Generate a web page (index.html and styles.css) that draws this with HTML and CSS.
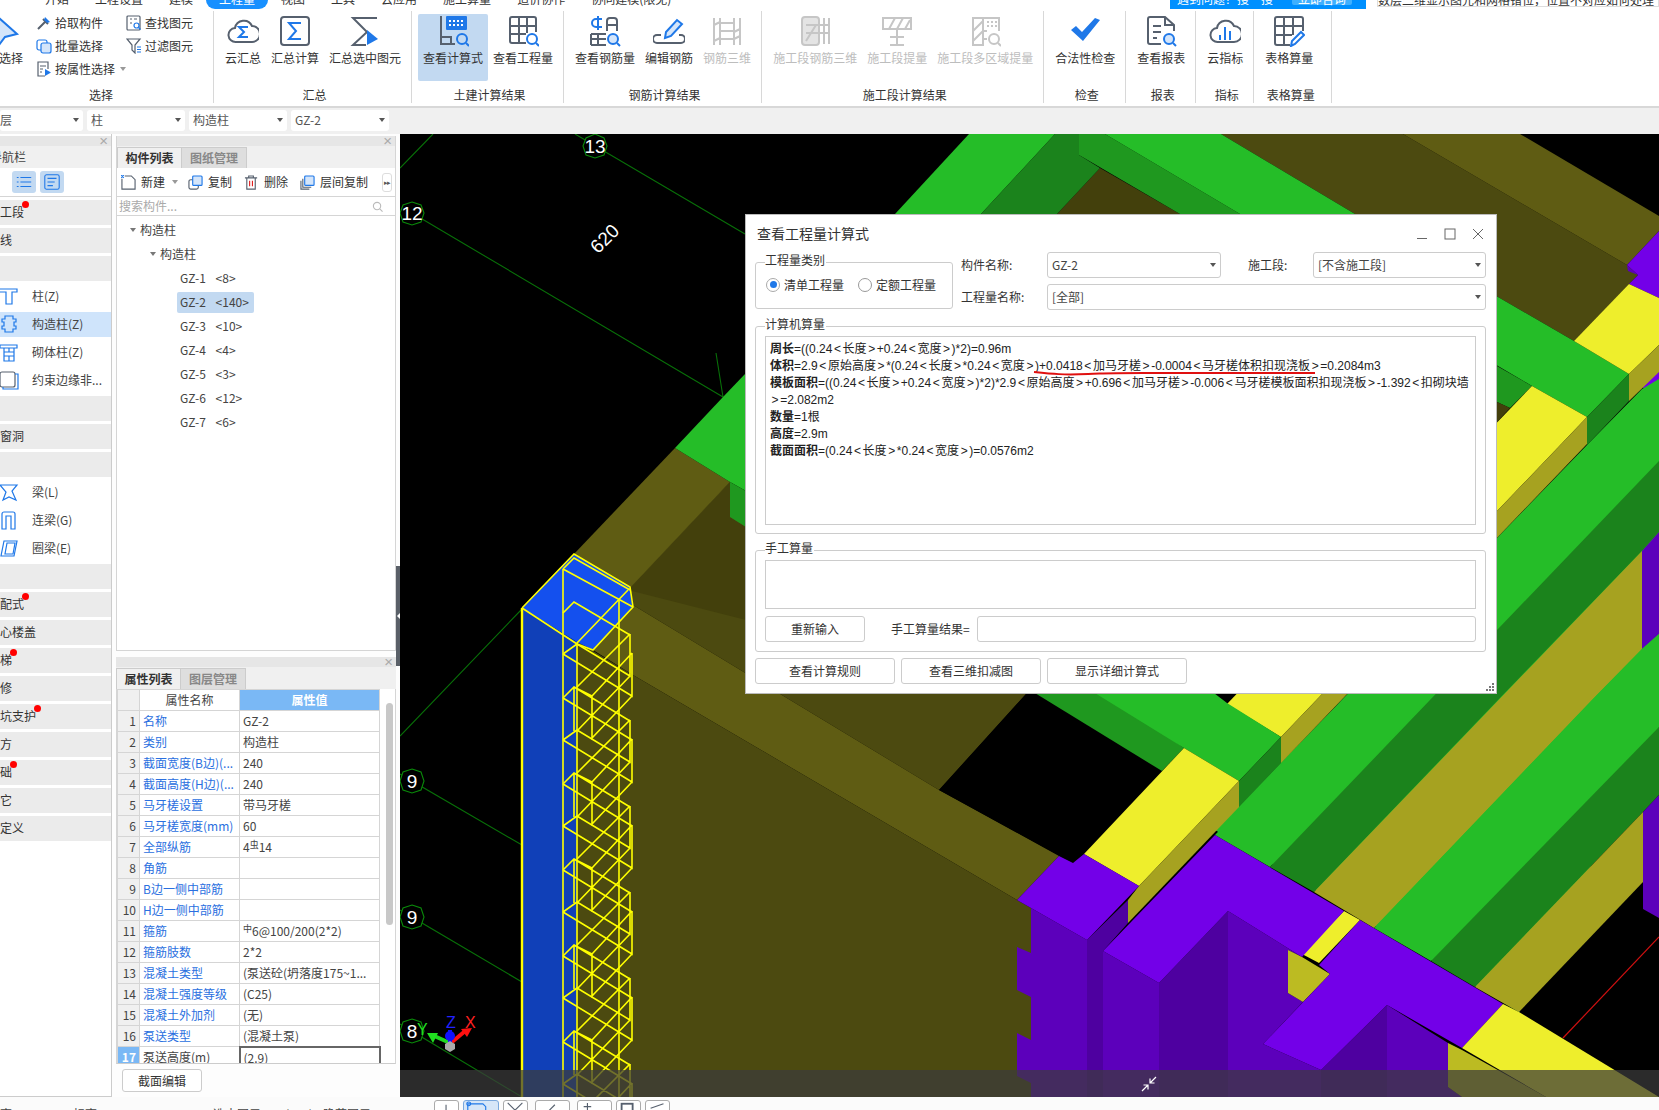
FILE: index.html
```html
<!DOCTYPE html>
<html lang="zh">
<head>
<meta charset="utf-8">
<title>查看工程量计算式</title>
<link rel="stylesheet" href="styles.css">
</head>
<body>
<div class="app">
  <div class="tabs">
    <span>开始</span><span>工程设置</span><span>建模</span><span class="tab-on">工程量</span><span>视图</span><span>工具</span><span>云应用</span><span>施工算量</span><span>造价协作</span><span>协同建模(限免)</span>
    <div class="banner"><span>遇到问题？搜一搜</span><b>立即咨询</b></div>
    <div class="topsearch">数层二维显示图元和网格错位，位置不对应如何处理</div>
  </div>

  <div class="ribbon">
    <div class="group g-first">
      <div class="btns">
        <div class="btn btn-sel">
          <svg class="ic" viewBox="0 0 32 32"><path class="b lf" d="M4 3 L22 19 L10 22 L4 30 Z"/></svg><span>选择</span>
        </div>
        <div class="col c1">
          <div class="mini"><svg viewBox="0 0 16 16"><path class="g" d="M2 14l7-7M7 4l5 5"/><path class="bf" d="M9 2l5 5-3 1-3-3z"/></svg><span>拾取构件</span></div>
          <div class="mini"><svg viewBox="0 0 16 16"><rect class="b1" x="1" y="2" width="10" height="10" rx="2"/><rect class="b1 lf" x="5" y="5" width="10" height="10" rx="2"/></svg><span>批量选择</span></div>
          <div class="mini"><svg viewBox="0 0 16 16"><path class="g1" d="M9 15H2V1h10v7M4 5h6M4 8h3M4 11h2"/><path class="bf" d="M9 8l6 3.500L9 15z"/></svg><span>按属性选择</span><i class="caret c-l"></i></div>
        </div>
        <div class="col">
          <div class="mini"><svg viewBox="0 0 16 16"><rect class="g1" x="1" y="1" width="13" height="14" rx="1"/><path class="g1" d="M4 4h2M8 4h3M4 8h2"/><circle class="b1" cx="10.500" cy="10.500" r="2.500"/><path class="b1" d="M12.500 12.500l2 2"/></svg><span>查找图元</span></div>
          <div class="mini"><svg viewBox="0 0 16 16"><path class="g1" d="M1 1h13L9 7v8l-3-3V7z"/><path class="b1" d="M11 9h4M11 11.500h4M11 14h4"/></svg><span>过滤图元</span></div>
        </div>
      </div>
      <div class="glabel gl-first">选择</div>
    </div>

    <div class="group">
      <div class="btns">
        <div class="btn"><svg class="ic" viewBox="0 0 32 32"><path class="g" d="M9 27a7 7 0 0 1-1-14 9 9 0 0 1 17-2 8 8 0 0 1 0 16z"/><path class="b" d="M21 12h-9l5 5-5 5h9"/></svg><span>云汇总</span></div>
        <div class="btn"><svg class="ic" viewBox="0 0 32 32"><rect class="g" x="2" y="2" width="28" height="28" rx="3"/><path class="b" d="M22 8H10l7 8-7 8h12"/></svg><span>汇总计算</span></div>
        <div class="btn"><svg class="ic" viewBox="0 0 32 32"><path class="g" d="M28 3H4l14 14L4 30h13"/><path class="bf" d="M18 15l11 9-11 6z"/></svg><span>汇总选中图元</span></div>
      </div>
      <div class="glabel">汇总</div>
    </div>

    <div class="group">
      <div class="btns">
        <div class="btn btn-on"><svg class="ic" viewBox="0 0 32 32"><path class="g" d="M4 1v28h14M4 22h10v7"/><rect class="bf" x="9" y="1" width="21" height="14" rx="1"/><path class="w" stroke-dasharray="2 2" d="M12 6h16M12 10h16"/><circle class="b" cx="25" cy="24" r="5"/><path class="b" d="M29 28l3 3"/></svg><span>查看计算式</span></div>
        <div class="btn"><svg class="ic" viewBox="0 0 32 32"><path class="g" d="M19 28H5a2 2 0 0 1-2-2V4a2 2 0 0 1 2-2h22a2 2 0 0 1 2 2v13M3 11h26M3 19h16M12 2v26M20 2v16"/><circle class="b" cx="25" cy="24" r="5"/><path class="b" d="M29 28l3 3"/></svg><span>查看工程量</span></div>
      </div>
      <div class="glabel">土建计算结果</div>
    </div>

    <div class="group">
      <div class="btns">
        <div class="btn"><svg class="ic" viewBox="0 0 32 32"><path class="b" d="M13 4H7a3 3 0 0 0 0 8h6M9 1v14"/><path class="g" d="M18 16V6a3 3 0 0 1 3-3h4a3 3 0 0 1 3 3v10M18 10h10M2 30V19M2 24h15M2 30h15M9 19v11M2 19h15"/><circle class="b lf" cx="24" cy="24" r="5"/><path class="b" d="M28 28l3 3"/></svg><span>查看钢筋量</span></div>
        <div class="btn"><svg class="ic" viewBox="0 0 32 32"><path class="g" d="M8 20H4a3 3 0 0 0 0 8h24a3 3 0 0 0 0-8h-2"/><path class="b lf" d="M12 23l1-6L24 5l5 4-11 12z"/></svg><span>编辑钢筋</span></div>
        <div class="btn off"><svg class="ic" viewBox="0 0 32 32"><path class="d" d="M3 3v27M29 3v27M9 3v27M23 3v27M9 8h14M9 16h14M9 24h14M3 10l6-3M23 17l6-3M3 26l6-3M23 24l6-3"/></svg><span>钢筋三维</span></div>
      </div>
      <div class="glabel">钢筋计算结果</div>
    </div>

    <div class="group">
      <div class="btns">
        <div class="btn off"><svg class="ic" viewBox="0 0 32 32"><rect class="d df" x="3" y="2" width="17" height="28" rx="3"/><path class="d" d="M25 3v26M30 3v26M7 10h23M7 18h23M7 26l10-16"/></svg><span>施工段钢筋三维</span></div>
        <div class="btn off"><svg class="ic" viewBox="0 0 32 32"><path class="d" d="M2 3h28v11H2zM8 14l6-11M16 14l6-11M24 14l5-9M16 14v16M9 22h14M9 30h14"/></svg><span>施工段提量</span></div>
        <div class="btn off"><svg class="ic" viewBox="0 0 32 32"><path class="d" d="M14 3H4v27h10V3zM14 3h16v13M4 16l10-10M4 26l10-10M14 16h4M14 24h4"/><path class="d" stroke-dasharray="2 2" d="M18 7h10M18 11h10"/><circle class="d" cx="25" cy="24" r="5"/><path class="d" d="M29 28l3 3"/></svg><span>施工段多区域提量</span></div>
      </div>
      <div class="glabel">施工段计算结果</div>
    </div>

    <div class="group">
      <div class="btns">
        <div class="btn"><svg class="ic" viewBox="0 0 32 32"><path class="bf" d="M2 15l5-4 6 6L26 3l5 2-17 21z"/></svg><span>合法性检查</span></div>
      </div>
      <div class="glabel">检查</div>
    </div>

    <div class="group">
      <div class="btns">
        <div class="btn"><svg class="ic" viewBox="0 0 32 32"><path class="g" d="M16 29H5a2 2 0 0 1-2-2V4a2 2 0 0 1 2-2h15l9 8v6M20 2v8h9M8 11h8M8 17h8M8 23h4"/><circle class="b lf" cx="24" cy="24" r="5"/><path class="b" d="M28 28l3 3"/></svg><span>查看报表</span></div>
      </div>
      <div class="glabel">报表</div>
    </div>

    <div class="group">
      <div class="btns">
        <div class="btn"><svg class="ic" viewBox="0 0 32 32"><path class="g" d="M9 27a7 7 0 0 1-1-14 9 9 0 0 1 17-2 8 8 0 0 1 0 16z"/><path class="b" d="M11 25v-5M16 25V12M21 25v-9"/></svg><span>云指标</span></div>
      </div>
      <div class="glabel">指标</div>
    </div>

    <div class="group g-last">
      <div class="btns">
        <div class="btn"><svg class="ic" viewBox="0 0 32 32"><path class="g" d="M17 30H4a2 2 0 0 1-2-2V4a2 2 0 0 1 2-2h24a2 2 0 0 1 2 2v12M2 11h28M2 20h17M11 2v28M20 2v18"/><path class="b" d="M18 31l1-5 9-9 3 3-9 9z"/></svg><span>表格算量</span></div>
      </div>
      <div class="glabel">表格算量</div>
    </div>
  </div>

  <div class="selbar">
    <div class="sel s0">层<i class="caret"></i></div>
    <div class="sel">柱<i class="caret"></i></div>
    <div class="sel">构造柱<i class="caret"></i></div>
    <div class="sel">GZ-2<i class="caret"></i></div>
  </div>

  <div class="work">
    <aside class="nav">
      <div class="phead"><span class="px">×</span></div>
      <div class="navtitle"><span>导航栏</span></div>
      <div class="navbtns">
        <span class="nb"><svg viewBox="0 0 20 20"><path class="b1" d="M6 5h12M6 10h12M6 15h12"/><path class="b1" stroke-width="2" d="M2 5h2M2 10h2M2 15h2"/></svg></span>
        <span class="nb"><svg viewBox="0 0 20 20"><rect class="b1" x="2" y="2" width="16" height="16" rx="2"/><path class="b1" d="M5 6h10M5 10h8M5 14h6"/></svg></span>
      </div>
      <div class="navlist">
        <div class="cat"><span class="cl">施工段</span><i class="dot"></i></div>
        <div class="cat"><span class="cl">轴线</span></div>
        <div class="cat"></div>
        <div class="item"><svg viewBox="0 0 20 20"><path class="b1" d="M0 3h17v3H12v12H6V6H0"/></svg>柱(Z)</div>
        <div class="item item-on"><svg viewBox="0 0 20 20"><path class="b1" d="M5 2h8v3h3v3h-2v4h2v3h-3v3H5v-3H2v-3h2V8H2V5h3z"/></svg>构造柱(Z)</div>
        <div class="item"><svg viewBox="0 0 20 20"><path class="b1" d="M0 3h17v3H0zM4 6h10v13H4zM4 10h10M4 14h10M9 6v4M9 14v5"/></svg>砌体柱(Z)</div>
        <div class="item"><svg viewBox="0 0 20 20"><rect class="g1" x="0" y="2" width="15" height="15" rx="2"/><path class="b1" d="M15 4h3v15H3v-2"/></svg>约束边缘非...</div>
        <div class="cat"></div>
        <div class="cat"><span class="cl">门窗洞</span></div>
        <div class="cat"></div>
        <div class="item"><svg viewBox="0 0 20 20"><path class="b1" d="M0 3h17l-5 6 4 9-7-3-6 3 3-8z"/></svg>梁(L)</div>
        <div class="item"><svg viewBox="0 0 20 20"><path class="b1" d="M2 19V4a2 2 0 0 1 2-2h9a2 2 0 0 1 2 2v15h-4V6H6v13z"/></svg>连梁(G)</div>
        <div class="item"><svg viewBox="0 0 20 20"><path class="b1" d="M4 3h13l-3 15H1z"/><path class="b1" d="M7 5h8l-2 11H5z"/></svg>圈梁(E)</div>
        <div class="cat"></div>
        <div class="cat"><span class="cl">装配式</span><i class="dot"></i></div>
        <div class="cat"><span class="cl">空心楼盖</span></div>
        <div class="cat"><span class="cl">楼梯</span><i class="dot"></i></div>
        <div class="cat"><span class="cl">装修</span></div>
        <div class="cat"><span class="cl">基坑支护</span><i class="dot"></i></div>
        <div class="cat"><span class="cl">土方</span></div>
        <div class="cat"><span class="cl">基础</span><i class="dot"></i></div>
        <div class="cat"><span class="cl">其它</span></div>
        <div class="cat"><span class="cl">自定义</span></div>
      </div>
    </aside>

    <section class="mid">
      <div class="panel comp">
        <div class="phead"><span class="px">×</span></div>
        <div class="ptabs"><span class="ptab ptab-on">构件列表</span><span class="ptab">图纸管理</span></div>
        <div class="ptools">
          <span class="tool t1"><svg viewBox="0 0 16 16"><path class="g1" d="M1 4v11h14V5l-4-4H4"/><path class="b1" stroke-width="2" d="M0 0l3 3M3 0L0 3"/></svg>新建<i class="caret c-l"></i></span>
          <span class="tool t2"><svg viewBox="0 0 16 16"><rect class="g1" x="1" y="5" width="10" height="10" rx="2"/><rect class="b1 lf" x="5" y="1" width="10" height="10" rx="1"/></svg>复制</span>
          <span class="tool t3"><svg viewBox="0 0 16 16"><path class="g1" d="M1 3h13M5 3V1h5v2M3 3v12h9V3"/><path class="r1" d="M6 6v6M9 6v6"/></svg>删除</span>
          <span class="tool t4"><svg viewBox="0 0 16 16"><path class="g1" d="M1 6v9h9M3 4v9h9"/><rect class="b1 lf" x="5" y="1" width="10" height="10" rx="1"/></svg>层间复制</span>
          <span class="more">▸▸</span>
        </div>
        <div class="psearch"><span>搜索构件...</span><svg viewBox="0 0 12 12"><circle class="gr" cx="5.500" cy="5.500" r="4"/><path class="gr" d="M8.500 8.500l3 3"/></svg></div>
        <div class="tree">
          <div class="tr t-a"><i class="tcaret"></i>构造柱</div>
          <div class="tr t-b"><i class="tcaret"></i>构造柱</div>
          <div class="tr t-c"><span class="leaf">GZ-1 &lt;8&gt;</span></div>
          <div class="tr t-c"><span class="leaf leaf-on">GZ-2 &lt;140&gt;</span></div>
          <div class="tr t-c"><span class="leaf">GZ-3 &lt;10&gt;</span></div>
          <div class="tr t-c"><span class="leaf">GZ-4 &lt;4&gt;</span></div>
          <div class="tr t-c"><span class="leaf">GZ-5 &lt;3&gt;</span></div>
          <div class="tr t-c"><span class="leaf">GZ-6 &lt;12&gt;</span></div>
          <div class="tr t-c"><span class="leaf">GZ-7 &lt;6&gt;</span></div>
        </div>
      </div>
      <div class="panel prop">
        <div class="phead"><span class="px">×</span></div>
        <div class="ptabs"><span class="ptab ptab-on">属性列表</span><span class="ptab">图层管理</span></div>
        <div class="tbwrap">
          <table class="props">
            <colgroup><col class="c-n"><col class="c-k"><col class="c-v"></colgroup>
            <tr class="hd"><th></th><th>属性名称</th><th class="hv">属性值</th></tr>
            <tr><td class="n">1</td><td class="k">名称</td><td>GZ-2</td></tr>
            <tr><td class="n">2</td><td class="k">类别</td><td>构造柱</td></tr>
            <tr><td class="n">3</td><td class="k">截面宽度(B边)(...</td><td>240</td></tr>
            <tr><td class="n">4</td><td class="k">截面高度(H边)(...</td><td>240</td></tr>
            <tr><td class="n">5</td><td class="k">马牙槎设置</td><td>带马牙槎</td></tr>
            <tr><td class="n">6</td><td class="k">马牙槎宽度(mm)</td><td>60</td></tr>
            <tr><td class="n">7</td><td class="k">全部纵筋</td><td>4<sup class="rb">虫</sup>14</td></tr>
            <tr><td class="n">8</td><td class="k">角筋</td><td></td></tr>
            <tr><td class="n">9</td><td class="k">B边一侧中部筋</td><td></td></tr>
            <tr><td class="n">10</td><td class="k">H边一侧中部筋</td><td></td></tr>
            <tr><td class="n">11</td><td class="k">箍筋</td><td><sup class="rb">中</sup>6@100/200(2*2)</td></tr>
            <tr><td class="n">12</td><td class="k">箍筋肢数</td><td>2*2</td></tr>
            <tr><td class="n">13</td><td class="k">混凝土类型</td><td>(泵送砼(坍落度175~1...</td></tr>
            <tr><td class="n">14</td><td class="k">混凝土强度等级</td><td>(C25)</td></tr>
            <tr><td class="n">15</td><td class="k">混凝土外加剂</td><td>(无)</td></tr>
            <tr><td class="n">16</td><td class="k">泵送类型</td><td>(混凝土泵)</td></tr>
            <tr class="cur"><td class="n">17</td><td>泵送高度(m)</td><td class="edit">(2.9)</td></tr>
          </table>
          <div class="vscroll"><i></i></div>
        </div>
        <div class="pfoot"><span class="fbtn">截面编辑</span></div>
      </div>
    </section>

    <div class="splitter"><i></i></div>

    <main class="canvas">
      <svg class="scene" viewBox="400 134 1259 963" width="1259" height="963">
        <rect x="400" y="134" width="1259" height="963" fill="#000"/>
        <g fill="none" stroke="#087008" stroke-width="1.100">
          <path d="M400 168L433 134M412 213L723 397M716 353L723 397M575 134L745 234M400 736L522 609M400 774L522 845M400 910L522 982M400 1024L522 1097"/>
        </g>
        <!-- far beams -->
        <polygon fill="#4c4a10" points="1221,134 1403,134 1627,265 1638,275 1574,341 1355,214"/>
        <polygon fill="#5f5c13" points="1403,134 1520,134 1659,216 1659,231 1627,265"/>
        <polygon fill="#43400c" points="1100,168 1057,214 1180,214"/>
        <polygon fill="#25bd28" points="969,134 1055,134 981,214 895,214"/>
        <polygon fill="#1b831c" points="1055,134 1079,134 1079,155 1100,168 1057,214 981,214"/>
        <polygon fill="#1f981f" points="1079,134 1105,134 1240,214 1180,214 1079,155"/>
        <polygon fill="#25bd28" points="1105,134 1221,134 1355,214 1240,214"/>
        <polygon fill="#7300e8" points="1659,231 1627,265 1638,275 1629,284 1659,298"/>
        <polygon fill="#5c00bb" points="1627,265 1638,275 1628,271"/>
        <polygon fill="#7300e8" points="1642,387 1659,370 1659,398"/>
        <!-- left beams -->
        <polygon fill="#4c4a10" points="730,482 630,587 633,605 939,790 1026,694 1000,600 746,500"/>
        <polygon fill="#43400c" points="730,482 730,517 746,527 746,620 628,590"/>
        <polygon fill="#5f5c13" points="675,448 730,482 628,590 574,554"/>
        <polygon fill="#25bd28" points="745,374 723,397 675,448 730,482 746,491"/>
        <polygon fill="#1f981f" points="730,482 746,491 746,527 730,517"/>
        <polygon fill="#5f5c13" points="633,605 939,790 1059,856 1017,900 633,675 593,650"/>
        <polygon fill="#4c4a10" points="575,640 633,675 1017,900 1031,908 1031,1097 575,1097"/>
        <!-- stripes -->
        <polygon fill="#25bd28" points="1215,830 1342,700 1659,379 1659,727 1519,1012"/>
        <polygon fill="#25bd28" points="1215,835 1270,867 1428,700 1497,630 1659,461 1659,379 1642,389 1587,445 1497,538 1342,700"/>
        <polygon fill="#1b831c" points="1270,867 1314,892 1498,700 1642,551 1659,532 1659,461"/>
        <polygon fill="#a6a220" points="1314,892 1374,928 1592,700 1642,649 1642,551"/>
        <polygon fill="#5c00bb" points="1642,551 1659,532 1659,634 1642,649"/>
        <polygon fill="#25bd28" points="1374,928 1431,961 1659,727 1659,634 1642,649 1592,700"/>
        <polygon fill="#1b831c" points="1431,961 1475,987 1643,812 1659,795 1659,727"/>
        <polygon fill="#a6a220" points="1475,987 1519,1012 1643,882 1643,812"/>
        <polygon fill="#5c00bb" points="1643,812 1659,795 1659,918 1643,909"/>
        <path d="M1563 1038L1659 937" stroke="#d01010" stroke-width="1.200" fill="none"/>
        <!-- upper right band -->
        <polygon fill="#25bd28" points="1355,214 1574,341 1629,374 1587,417 1532,386 1240,214"/>
        <polygon fill="#1b831c" points="1629,374 1629,401 1587,445 1587,417"/>
        <polygon fill="#1f981f" points="1497,366 1532,386 1510,408 1497,402"/>
        <polygon fill="#43400c" points="1497,402 1510,408 1497,422"/>
        <polygon fill="#eeee2c" points="1629,284 1659,298 1659,345 1629,374 1574,341"/>
        <polygon fill="#a6a220" points="1629,374 1659,345 1659,372 1629,401"/>
        <polygon fill="#eeee2c" points="1532,386 1587,417 1281,737 1227,704"/>
        <polygon fill="#a6a220" points="1587,417 1587,444 1281,763 1281,737"/>
        <!-- black hole edge & mid bands -->
        <polygon fill="#000" points="1026,694 1042,700 1162,771 1073,863 939,790"/>
        <polygon fill="#1f981f" points="1030,690 1103,690 1184,748 1162,771"/>
        <polygon fill="#25bd28" points="1090,690 1210,690 1227,703 1281,737 1239,781 1184,748"/>
        <polygon fill="#1b831c" points="1281,737 1281,763 1239,807 1239,781"/>
        <polygon fill="#eeee2c" points="1184,748 1239,781 1139,886 1084,854"/>
        <polygon fill="#a6a220" points="1239,781 1239,807 1128,923 1128,900 1139,886"/>
        <!-- purple base -->
        <polygon fill="#5c00bb" points="1017,947 1031,953 1031,997 1017,990"/>
        <polygon fill="#5c00bb" points="1017,1033 1031,1040 1031,1083 1017,1076"/>
        <polygon fill="#5c00bb" points="1031,908 1087,940 1087,1097 1031,1097"/>
        <polygon fill="#4e00a0" points="1087,940 1128,900 1128,923 1103,951 1103,1097 1087,1097"/>
        <polygon fill="#5c00bb" points="1103,951 1159,983 1159,1097 1103,1097"/>
        <polygon fill="#4e00a0" points="1159,983 1228,911 1228,1097 1159,1097"/>
        <polygon fill="#5c00bb" points="1228,911 1302,957 1288,950 1288,993 1303,1002 1263,1044 1321,1070 1321,1097 1228,1097"/>
        <polygon fill="#4e00a0" points="1321,1070 1387,1005 1387,1097 1321,1097"/>
        <polygon fill="#5c00bb" points="1387,1005 1448,1043 1448,1087 1462,1097 1387,1097"/>
        <polygon fill="#7300e8" points="1059,856 1073,863 1084,854 1139,886 1087,940 1017,900"/>
        <polygon fill="#bcbb22" points="1288,950 1302,957 1330,974 1303,1002 1288,993"/>
        <polygon fill="#eeee2c" points="1344,911 1360,920 1319,963 1302,954"/>
        <polygon fill="#7300e8" points="1215,835 1344,911 1302,957 1228,911 1159,983 1103,951"/>
        <polygon fill="#7300e8" points="1360,920 1503,1004 1462,1048 1387,1005 1321,1070 1263,1044 1330,974 1319,965"/>
        <polygon fill="#eeee2c" points="1503,1004 1519,1012 1659,1097 1546,1097 1462,1048"/>
        <polygon fill="#bcbb22" points="1448,1043 1462,1050 1546,1097 1462,1097 1448,1087"/>
        <!-- selected column -->
        <polygon fill="#1040b8" points="522,608 577,642 577,1097 522,1097"/>
        <polygon fill="#1450ee" points="522,608 574,554 630,587 633,607 593,650 577,642"/>
        <g fill="none" stroke="#ffff00" stroke-width="1.600">
          <path stroke-width="2.400" d="M522 608V1097"/>
          <path d="M563 569V1097M577 644V1097M619 600V1097"/>
          <path d="M522 608L574 554L630 587L633 607L593 650L577 644L522 608M563 569L574 558L630 590M563 569L633 607M628 590L577 643M563 613L574 602L630 635"/>
          <g id="cy">
            <path d="M563 654L577 644L630 676V634M563 654L632 696V653M592 696L632 653M577 687L630 634M563 698L574 687L592 696V738L632 696M574 687V731M577 731L630 676M574 687L630 721M563 698L632 740"/>
          </g>
          <use href="#cy" y="86"/><use href="#cy" y="172"/><use href="#cy" y="258"/><use href="#cy" y="344"/><use href="#cy" y="430"/>
        </g>
        <!-- axes -->
        <g fill="#000" stroke="#0a8a0a" stroke-width="1.100">
          <polygon points="595,134 604,138 607,146 604,155 595,158 586,155 583,146 586,138"/>
          <polygon points="412,202 421,205 424,213 421,222 412,225 403,222 400,213 403,205"/>
          <polygon points="412,769 421,772 424,781 421,790 412,793 403,790 400,781 403,772"/>
          <polygon points="412,905 421,908 424,917 421,926 412,929 403,926 400,917 403,908"/>
          <polygon points="412,1019 421,1022 424,1031 421,1040 412,1043 403,1040 400,1031 403,1022"/>
        </g>
        <g class="axis" text-anchor="middle">
          <text x="595" y="153">13</text><text x="412" y="220">12</text><text x="412" y="788">9</text><text x="412" y="924">9</text><text x="412" y="1038">8</text>
          <text x="0" y="0" transform="translate(605 239) rotate(-45)" dy="6">620</text>
        </g>
        <!-- gizmo -->
        <g class="giz">
          <text x="417" y="1035" fill="#22dd22">Y</text><text x="446" y="1028" fill="#2222ff">Z</text><text x="465" y="1028" fill="#ff2020">X</text>
          <path d="M450 1043L432 1035" stroke="#20d820" stroke-width="4"/><polygon fill="#20e020" points="427,1033 438,1033 433,1043"/>
          <path d="M452 1042L464 1032" stroke="#ff1010" stroke-width="4"/><polygon fill="#ff1010" points="472,1028 461,1029 467,1037"/>
          <path d="M450 1042V1030" stroke="#1010ff" stroke-width="4"/><circle cx="450" cy="1036" r="5" fill="#1010ff"/>
          <polygon fill="#aaa" points="445,1044 450,1041 455,1044 455,1049 450,1052 445,1049"/>
        </g>
      </svg>

      <div class="overlay"><svg viewBox="0 0 16 16" width="16" height="16"><path class="w1" d="M15 1L9 7M9 2.500V7h4.500M1 15l6-6M7 13.500V9H2.500"/></svg></div>

      <div class="dialog">
        <div class="dtitle"><span>查看工程量计算式</span>
          <div class="wctl">
            <svg viewBox="0 0 12 12"><path class="wc" d="M1 10.500h10"/></svg>
            <svg viewBox="0 0 12 12"><rect class="wc" x="1" y="1" width="10" height="10"/></svg>
            <svg viewBox="0 0 12 12"><path class="wc" d="M1 1l10 10M11 1L1 11"/></svg>
          </div>
        </div>
        <div class="dtop">
          <div class="grp gtype">
            <span class="lgd">工程量类别</span>
            <label class="radio"><i class="rd rd-on"></i>清单工程量</label>
            <label class="radio"><i class="rd"></i>定额工程量</label>
          </div>
          <div class="dform">
            <span class="fl">构件名称:</span><div class="dsel">GZ-2<i class="caret"></i></div>
            <span class="fl fl2">施工段:</span><div class="dsel">[不含施工段]<i class="caret"></i></div>
            <span class="fl">工程量名称:</span><div class="dsel span3">[全部]<i class="caret"></i></div>
          </div>
        </div>
        <div class="grp gcalc">
          <span class="lgd">计算机算量</span>
          <div class="ta ta-big">
            <p><b>周长</b>=((0.24<i class="ab">&lt;</i>长度<i class="ab">&gt;</i>+0.24<i class="ab">&lt;</i>宽度<i class="ab">&gt;</i>)*2)=0.96m</p>
            <p><b>体积</b>=2.9<i class="ab">&lt;</i>原始高度<i class="ab">&gt;</i>*(0.24<i class="ab">&lt;</i>长度<i class="ab">&gt;</i>*0.24<i class="ab">&lt;</i>宽度<i class="ab">&gt;</i>)+0.0418<i class="ab">&lt;</i>加马牙槎<i class="ab">&gt;</i>-0.0004<i class="ab">&lt;</i>马牙槎体积扣现浇板<i class="ab">&gt;</i>=0.2084m3</p>
            <p><b>模板面积</b>=((0.24<i class="ab">&lt;</i>长度<i class="ab">&gt;</i>+0.24<i class="ab">&lt;</i>宽度<i class="ab">&gt;</i>)*2)*2.9<i class="ab">&lt;</i>原始高度<i class="ab">&gt;</i>+0.696<i class="ab">&lt;</i>加马牙槎<i class="ab">&gt;</i>-0.006<i class="ab">&lt;</i>马牙槎模板面积扣现浇板<i class="ab">&gt;</i>-1.392<i class="ab">&lt;</i>扣砌块墙</p>
            <p><i class="ab">&gt;</i>=2.082m2</p>
            <p><b>数量</b>=1根</p>
            <p><b>高度</b>=2.9m</p>
            <p><b>截面面积</b>=(0.24<i class="ab">&lt;</i>长度<i class="ab">&gt;</i>*0.24<i class="ab">&lt;</i>宽度<i class="ab">&gt;</i>)=0.0576m2</p>
            <svg class="redline" viewBox="0 0 284 6" width="284" height="6"><path d="M1 2C20 4 30 5 55 4S70 3 110 3 200 3 282 3" fill="none" stroke="#e01010" stroke-width="2"/></svg>
          </div>
        </div>
        <div class="grp gman">
          <span class="lgd">手工算量</span>
          <div class="ta ta-small"></div>
          <div class="manrow">
            <span class="dbtn dbtn-a">重新输入</span>
            <span class="manl">手工算量结果=</span>
            <div class="maninp"></div>
          </div>
        </div>
        <div class="dfoot">
          <span class="dbtn dbtn-b">查看计算规则</span>
          <span class="dbtn dbtn-b">查看三维扣减图</span>
          <span class="dbtn dbtn-b">显示详细计算式</span>
        </div>
        <svg class="grip" viewBox="0 0 8 8" width="8" height="8"><path fill="#777" d="M6 0h2v2H6zM3 3h2v2H3zM6 3h2v2H6zM0 6h2v2H0zM3 6h2v2H3zM6 6h2v2H6z"/></svg>
      </div>
    </main>
  </div>

  <div class="status">
    <div class="stext">
      <span class="st1">高：  3.0</span><span class="st2">标高：  -0~3.0</span><span class="st3">选中图元：  1(140)</span><span class="st4">隐藏图元：  0</span>
    </div>
    <div class="sbtns">
      <span class="sb sb1"><svg viewBox="0 0 25 10"><path class="g1" d="M12 4v6"/></svg></span>
      <span class="sb sb2 sb-on"><svg viewBox="0 0 36 10"><path class="b1" d="M4 10V3h16l3 3v4"/><circle class="b1" cx="5" cy="3" r="2"/></svg></span>
      <span class="sb sb1"><svg viewBox="0 0 25 10"><path class="g1" d="M4 2l8 8 8-8"/></svg></span>
      <span class="sb sb3"><svg viewBox="0 0 35 10"><path class="g1" d="M14 10l6-6"/></svg></span>
      <span class="sb sb3"><svg viewBox="0 0 35 10"><path class="g1" d="M6 6h8M10 2v8"/></svg></span>
      <span class="sb sb1"><svg viewBox="0 0 25 10"><rect class="g" x="5" y="3" width="12" height="9"/></svg></span>
      <span class="sb sb1"><svg viewBox="0 0 25 10"><path class="g1" d="M5 8l14-5"/></svg></span>
    </div>
  </div>
</div>
</body>
</html>
```

FILE: styles.css
```css
* { box-sizing: border-box; }
html, body { margin: 0; padding: 0; }
body {
  width: 1659px;
  height: 1110px;
  overflow: hidden;
  background: #fafafa;
  color: #333;
  font: 12px/1.3 "Noto Sans CJK SC", "Liberation Sans", sans-serif;
}
i { font-style: normal; }
svg { display: block; flex: none; }
.app { display: flex; flex-direction: column; height: 1110px; }

/* svg stroke classes */
.g { fill: none; stroke: #56606e; stroke-width: 2; }
.g1 { fill: none; stroke: #56606e; stroke-width: 1.200; }
.b { fill: none; stroke: #1f78e8; stroke-width: 2; }
.b1 { fill: none; stroke: #1f78e8; stroke-width: 1.200; }
.b.lf, .b1.lf { fill: #d4e5fa; }
.bf { fill: #1f78e8; stroke: none; }
.w { fill: none; stroke: #fff; stroke-width: 2; }
.w1 { fill: none; stroke: #fff; stroke-width: 1.200; }
.d { fill: none; stroke: #c6c6c6; stroke-width: 2; }
.d.df { fill: #e4e4e4; }
.r1 { fill: none; stroke: #e02020; stroke-width: 1.200; }
.gr { fill: none; stroke: #bbb; stroke-width: 1.200; }

/* top tabs */
.tabs {
  position: relative;
  height: 9px;
  display: flex;
  gap: 26px;
  padding-left: 45px;
  background: #fff;
  line-height: 16px;
  overflow: hidden;
  flex: none;
}
.tabs > span { margin-top: -9px; white-space: nowrap; height: 18px; }
.tabs > .tab-on {
  margin-left: -13px;
  margin-right: -13px;
  padding: 0 13px;
  background: #1890ff;
  color: #fff;
  border-radius: 0 0 9px 9px;
}
.banner {
  position: absolute;
  left: 1170px;
  top: 0;
  width: 196px;
  height: 15px;
  background: #0090ff;
  color: #fff;
  border-radius: 0 0 3px 3px;
  display: flex;
  gap: 19px;
  padding-left: 7px;
}
.banner span, .banner b { margin-top: -9px; font-weight: 400; height: 14px; line-height: 16px; }
.banner b { background: #3fb0ff; padding: 0 6px; border-radius: 2px; }
.topsearch {
  position: absolute;
  left: 1377px;
  top: 0;
  width: 282px;
  height: 7px;
  line-height: 0;
  border: 1px solid #ddd;
  border-top: 0;
  color: #333;
  white-space: nowrap;
  overflow: hidden;
}

/* ribbon */
.ribbon {
  height: 99px;
  flex: none;
  display: flex;
  background: #fff;
  padding: 2px 0 4px;
  border-bottom: 2px solid #d8d8d8;
}
.group {
  display: flex;
  flex-direction: column;
  padding: 3px 5px 0 6px;
  border-right: 1px solid #d8d8d8;
  height: 92px;
}
.g-first { width: 214px; padding-left: 0; overflow: hidden; }
.g-last { padding-right: 13px; }
.btns { display: flex; height: 67px; }
.btn {
  display: flex;
  flex-direction: column;
  align-items: center;
  padding: 1px 5px 0;
  border-radius: 2px;
  white-space: nowrap;
  line-height: 16px;
}
.btn .ic { width: 32px; height: 32px; margin-bottom: 3px; }
.btn-on { background: #c2d9f1; }
.btn.off { color: #bdbdbd; }
.btn-sel { margin-left: -10px; }
.glabel { margin-top: auto; height: 16px; line-height: 16px; text-align: center; padding-left: 3px; white-space: nowrap; }
.gl-first { padding-left: 0; margin-right: 6px; }
.col { display: flex; flex-direction: column; width: 98px; margin-top: -3px; }
.c1 { margin-left: 4px; width: 101px; }
.mini { display: flex; align-items: center; height: 23px; gap: 3px; white-space: nowrap; }
.mini svg { width: 16px; height: 16px; }

.caret {
  display: inline-block;
  width: 0;
  height: 0;
  border: 3px solid transparent;
  border-top: 4px solid #555;
  border-bottom: 0;
}
.c-l { border-top-color: #999; margin-left: 2px; }

/* select bar */
.selbar {
  height: 26px;
  flex: none;
  background: #f0f0f0;
  display: flex;
  gap: 4px;
  padding-top: 2px;
  color: #555;
  line-height: 18px;
}
.sel {
  width: 98px;
  height: 21px;
  background: #fff;
  border-radius: 3px;
  display: flex;
  align-items: center;
  justify-content: space-between;
  padding: 0 4px 1px;
}
.s0 { width: 83px; padding-left: 0; }

/* workspace */
.work { height: 963px; flex: none; display: flex; background: #fdfdfd; }
.nav {
  width: 112px;
  flex: none;
  border-right: 1px solid #ccc;
  border-bottom: 1px solid #ccc;
  padding-top: 2px;
  overflow: hidden;
  background: #fff;
}
.phead {
  height: 10px;
  background: #e6e6e6;
  display: flex;
  justify-content: flex-end;
  padding-right: 3px;
  align-items: center;
  color: #999;
  flex: none;
}
.px { font-size: 15px; line-height: 10px; font-family: "Liberation Sans", sans-serif; color: #aaa; }
.navtitle { height: 22px; background: #f0f0f0; display: flex; align-items: center; color: #444; }
.navtitle span { margin-left: -10px; }
.navbtns { height: 29px; display: flex; gap: 4px; padding: 3px 0 0 12px; border-bottom: 1px solid #d5d5d5; }
.nb { width: 24px; height: 22px; background: #c2d9f1; border-radius: 3px; display: flex; align-items: center; justify-content: center; }
.nb svg { width: 18px; height: 18px; }
.navlist { padding-top: 3px; }
.cat {
  position: relative;
  height: 25px;
  margin-bottom: 3px;
  padding-bottom: 2px;
  background: #ebebeb;
  display: flex;
  align-items: center;
  color: #333;
  white-space: nowrap;
}
.cl { margin-left: -12px; }
.cl + .dot { position: relative; top: -7px; margin-left: -2px; width: 7px; height: 7px; border-radius: 50%; background: #f00; }
.item {
  height: 28px;
  display: flex;
  align-items: center;
  gap: 12px;
  padding: 0 2px 4px 0;
  white-space: nowrap;
  color: #444;
}
.item svg { width: 20px; height: 20px; }
.item-on { background: #cfe4fb; height: 25px; margin-bottom: 3px; padding-bottom: 1px; }

.mid { width: 280px; margin-left: 4px; flex: none; display: flex; flex-direction: column; padding-top: 2px; gap: 6px; }
.panel { background: #fff; border: 1px solid #d5d5d5; border-top: 0; display: flex; flex-direction: column; }
.comp { height: 515px; }
.prop { flex: 1; min-height: 0; border: 0; background: transparent; }
.ptabs { height: 22px; background: #f0f0f0; display: flex; padding-top: 1px; flex: none; }
.ptab {
  width: 65px;
  height: 21px;
  border: 1px solid #ccc;
  border-width: 1px 1px 0 0;
  background: #dedede;
  color: #888;
  font-weight: 700;
  text-align: center;
  line-height: 19px;
}
.ptab-on { background: #f0f0f0; color: #333; border-left: 1px solid #ccc; }
.ptools {
  height: 29px;
  display: flex;
  align-items: center;
  border-bottom: 1px solid #d5d5d5;
  background: #fff;
  flex: none;
}
.tool { display: flex; align-items: center; gap: 5px; white-space: nowrap; }
.tool svg { width: 15px; height: 15px; }
.t1 { margin-left: 4px; }
.t2 { margin-left: 10px; }
.t3 { margin-left: 12px; }
.t4 { margin-left: 12px; }
.more { margin-left: 14px; width: 10px; height: 19px; border: 1px solid #ddd; border-radius: 3px; font-size: 7px; line-height: 17px; text-align: center; color: #555; letter-spacing: -1px; overflow: hidden; }
.psearch { height: 19px; flex: none; display: flex; align-items: center; justify-content: space-between; border-bottom: 1px solid #d5d5d5; color: #aaa; padding: 0 12px 0 2px; }
.psearch svg { width: 11px; height: 11px; }
.tree { padding-top: 2px; flex: 1; color: #444; }
.tr { height: 24px; display: flex; align-items: center; white-space: nowrap; word-spacing: 7px; }
.t-a { padding-left: 13px; }
.t-b { padding-left: 33px; }
.t-c { padding-left: 60px; }
.tcaret { width: 0; height: 0; border: 3px solid transparent; border-top: 4px solid #777; border-bottom: 0; margin-right: 4px; }
.leaf { height: 21px; line-height: 20px; padding: 0 5px 0 3px; border-radius: 2px; }
.leaf-on { background: #c2d9f1; }

.tbwrap { height: 375px; flex: none; display: flex; overflow: hidden; background: #fff; border-left: 1px solid #d5d5d5; border-right: 1px solid #d5d5d5; border-bottom: 1px solid #ccc; }
.props { border-collapse: collapse; table-layout: fixed; width: 262px; flex: none; height: 378px; }
.c-n { width: 22px; }
.c-k { width: 100px; }
.c-v { width: 140px; }
.props th, .props td { height: 21px; padding: 0 3px; border: 1px solid #d5d5d5; font-weight: 400; white-space: nowrap; overflow: hidden; line-height: 18px; text-align: left; color: #444; }
.props .hd th { text-align: center; background: #fff; color: #444; }
.props .hd th:first-child { background: #f0f0f0; }
.props .hd .hv { background: #7ab8f5; color: #fff; font-weight: 700; }
.props .n { background: #f0f0f0; text-align: right; padding: 0 3px 0 0; }
.props .k { color: #2a6fe0; }
.props .cur .n { background: #7ab8f5; color: #fff; font-weight: 700; }
.props .edit { border: 2px solid #666; border-bottom: 0; }
.rb { font-size: 9px; line-height: 8px; vertical-align: 4px; }
.vscroll { flex: 1; padding: 14px 4px 0 5px; }
.vscroll i { display: block; width: 7px; height: 222px; border-radius: 4px; background: #c8c8c8; }
.pfoot { flex: 1; padding: 5px 0 0 6px; background: #fdfdfd; }
.fbtn { display: block; width: 80px; height: 23px; line-height: 21px; text-align: center; background: #fff; border: 1px solid #ccc; border-radius: 3px; }

.splitter { width: 4px; flex: none; }
.splitter i { display: flex; align-items: center; height: 100px; width: 4px; background: #5a6068; margin-top: 432px; }
.splitter i::after { content: ""; border: 3px solid transparent; border-right: 3px solid #fff; border-left: 0; margin-left: 1px; }

/* canvas */
.canvas { position: relative; flex: 1; overflow: hidden; background: #000; }
.scene { position: absolute; left: 0; top: 0; }
.axis text { fill: #fff; font: 19px "Liberation Sans", sans-serif; stroke: none; }
.giz text { font: 16px "Liberation Sans", sans-serif; }
.overlay {
  position: absolute;
  left: 0;
  right: 0;
  bottom: 0;
  height: 27px;
  background: rgba(60, 60, 60, .72);
  display: flex;
  align-items: center;
  padding-left: 741px;
}

/* dialog */
.dialog {
  position: absolute;
  left: 345px;
  top: 80px;
  width: 752px;
  height: 480px;
  background: #fff;
  border: 1px solid #bbb;
  padding: 0 10px 0 9px;
  color: #333;
}
.dtitle { height: 37px; display: flex; align-items: center; justify-content: space-between; font-size: 14px; padding-left: 2px; padding-right: 2px; }
.wctl { display: flex; gap: 16px; }
.wctl svg { width: 12px; height: 12px; }
.wc { fill: none; stroke: #666; stroke-width: 1; }
.dtop { display: flex; height: 58px; }
.grp { position: relative; border: 1px solid #ccc; border-radius: 3px; }
.lgd { position: absolute; left: 9px; top: -11px; background: #fff; line-height: 16px; padding-right: 1px; }
.gtype { width: 199px; height: 47px; margin-top: 10px; display: flex; padding: 13px 0 0 10px; gap: 14px; }
.radio { display: flex; align-items: center; height: 17px; gap: 4px; white-space: nowrap; }
.rd { width: 14px; height: 14px; border: 1px solid #999; border-radius: 50%; background: #fff; flex: none; display: flex; align-items: center; justify-content: center; }
.rd-on { border-color: #aaa; }
.rd-on::after { content: ""; width: 7px; height: 7px; border-radius: 50%; background: #1f78e8; }
.dform { margin-left: 8px; display: grid; grid-template-columns: 86px 174px 92px 173px; grid-auto-rows: 26px; row-gap: 6px; }
.fl { display: flex; align-items: center; white-space: nowrap; }
.fl2 { padding-left: 27px; }
.dsel { border: 1px solid #ccc; border-radius: 3px; display: flex; align-items: center; justify-content: space-between; padding: 0 4px; color: #444; }
.span3 { grid-column: span 3; }
.gcalc { height: 208px; margin-top: 16px; padding: 9px 9px 0; }
.gman { height: 102px; margin-top: 16px; padding: 9px 9px 0; }
.ta { border: 1px solid #ccc; position: relative; }
.ta-big { height: 189px; padding: 4px 0 0 4px; color: #222; line-height: 17px; white-space: nowrap; font-family: "Liberation Sans", "Noto Sans CJK SC", sans-serif; }
.ta-big p { margin: 0; height: 17px; }
.ta-big b { font-weight: 700; }
.ab { padding: 0 1.600px; }
.ta-small { height: 49px; }
.redline { position: absolute; left: 267px; top: 33px; }
.manrow { display: flex; align-items: center; margin-top: 7px; height: 26px; }
.dbtn { display: flex; align-items: center; justify-content: center; border: 1px solid #ccc; border-radius: 3px; height: 26px; background: #fff; }
.dbtn-a { width: 100px; }
.manl { margin-left: 26px; width: 86px; white-space: nowrap; }
.maninp { flex: 1; height: 26px; border: 1px solid #ccc; border-radius: 3px; }
.dfoot { display: flex; gap: 6px; margin-top: 6px; }
.dbtn-b { width: 140px; }
.grip { position: absolute; right: 2px; bottom: 2px; }

/* status */
.status { flex: 1; display: flex; background: #fbfbfb; overflow: hidden; min-height: 0; }
.stext { width: 434px; flex: none; padding-top: 9px; display: flex; white-space: pre; color: #444; line-height: 16px; }
.st1 { width: 73px; }
.st2 { width: 140px; }
.st3 { width: 110px; }
.sbtns { display: flex; gap: 4px; padding-top: 3px; }
.sb { height: 14px; width: 25px; background: #fff; border: 1px solid #aaa; border-radius: 3px 3px 0 0; overflow: hidden; }
.sb svg { width: 100%; }
.sb2 { width: 36px; }
.sb3 { width: 35px; margin-left: 3px; }
.sb-on { background: #d6e6f8; border-color: #7aa8dd; }
```
